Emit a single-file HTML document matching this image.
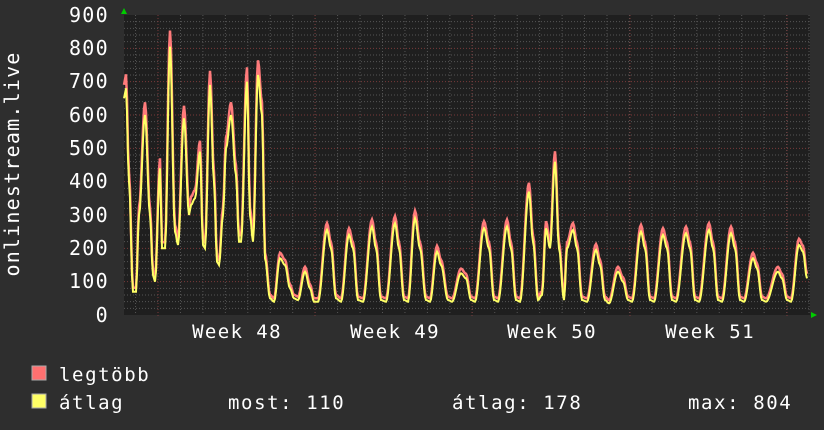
<!DOCTYPE html>
<html><head><meta charset="utf-8"><style>
body{margin:0;background:#2e2e2e;width:824px;height:430px;overflow:hidden;font-family:"DejaVu Sans Mono","Liberation Mono",monospace;color:#fff}
svg{position:absolute;left:0;top:0}
text{font-family:"DejaVu Sans Mono","Liberation Mono",monospace;fill:#fff}
</style></head><body>
<svg id="s" width="824" height="430" xmlns="http://www.w3.org/2000/svg">
<rect x="124" y="15" width="686" height="300" fill="#1f1f1f"/>
<g id="grid"></g>
<g id="data"></g>
<g font-size="20" text-anchor="end" letter-spacing="1.3">
<text x="109" y="22">900</text><text x="109" y="55">800</text><text x="109" y="88">700</text>
<text x="109" y="122">600</text><text x="109" y="155">500</text><text x="109" y="188">400</text>
<text x="109" y="222">300</text><text x="109" y="255">200</text><text x="109" y="288">100</text>
<text x="109" y="322">0</text>
</g>
<text transform="translate(19,164) rotate(-90)" font-size="20" text-anchor="middle" letter-spacing="1.2">onlinestream.live</text>
<g font-size="19" text-anchor="middle" letter-spacing="1.4">
<text x="237" y="338">Week 48</text><text x="395" y="338">Week 49</text>
<text x="552" y="338">Week 50</text><text x="710" y="338">Week 51</text>
</g>
<polygon points="121,14 127,14 124,8" fill="#00cc00"/>
<polygon points="811,312 811,318 817,315" fill="#00cc00"/>
<rect x="32" y="366" width="14" height="14" fill="#ff7070" stroke="#aaa" stroke-width="1"/>
<rect x="32" y="394" width="14" height="14" fill="#ffff66" stroke="#aaa" stroke-width="1"/>
<g font-size="19" letter-spacing="1.6">
<text x="59" y="381">legtöbb</text>
<text x="59" y="409">átlag</text>
<text x="228" y="409">most: 110</text>
<text x="452" y="409">átlag: 178</text>
<text x="688" y="409">max: 804</text>
</g>
</svg>
<script>
var ns="http://www.w3.org/2000/svg",g=document.getElementById('grid'),d=document.getElementById('data');
function ln(x1,y1,x2,y2,c){var l=document.createElementNS(ns,'line');l.setAttribute('x1',x1);l.setAttribute('y1',y1);l.setAttribute('x2',x2);l.setAttribute('y2',y2);l.setAttribute('stroke',c);l.setAttribute('stroke-width',1);l.setAttribute('stroke-dasharray','1,2');g.appendChild(l);}
for(var v=20;v<900;v+=20){var y=315-v/3;ln(124,y,810,y,v%100==0?'#7a3a3a':'#555');}
for(var x=158-22.45*1;x<810;x+=22.45){if(x>124)ln(x,15,x,315,'#555');}
[158,315,472,630,787].forEach(function(x){ln(x,15,x,318,'#7a3a3a');});
var P=[[124,650],[126,680],[129,400],[133,70],[136,70],[139,300],[145,600],[150,300],[153,120],[155,100],[160,440],[162,200],[165,200],[170,805],[175,250],[178,210],[184,590],[189,300],[191,330],[195,350],[200,490],[203,210],[205,200],[210,690],[214,400],[217,160],[219,150],[223,300],[226,500],[231,600],[236,420],[239,220],[241,220],[247,700],[250,300],[253,220],[258,720],[262,600],[265,170],[270,50],[274,40],[280,170],[285,150],[290,80],[294,50],[298,45],[305,130],[310,80],[314,40],[318,40],[327,255],[331,200],[336,50],[341,40],[349,240],[353,200],[358,45],[363,40],[372,265],[376,200],[381,45],[386,40],[395,275],[399,200],[404,45],[408,40],[415,290],[420,200],[426,45],[430,40],[437,190],[441,150],[448,45],[452,40],[461,125],[466,110],[471,45],[475,40],[484,260],[489,200],[494,45],[498,40],[507,265],[511,200],[516,45],[520,40],[529,370],[533,220],[538,45],[542,60],[546,260],[550,200],[555,460],[559,200],[564,45],[567,200],[573,255],[577,200],[582,45],[587,40],[596,195],[600,150],[605,45],[609,35],[618,130],[623,100],[628,45],[632,40],[641,250],[645,200],[650,45],[654,40],[663,240],[667,200],[672,45],[676,40],[686,245],[690,200],[695,45],[699,40],[709,255],[713,200],[718,45],[722,40],[731,245],[735,200],[740,45],[744,40],[753,170],[757,140],[762,45],[766,40],[778,130],[782,110],[787,45],[791,40],[799,210],[803,190],[807,110]];
function path(dy,sc){var s='';for(var i=0;i<P.length-1;i++){var a=P[i],b=P[i+1];for(var x=a[0];x<b[0];x+=1){var t=(x-a[0])/(b[0]-a[0]),f=(1-Math.cos(t*Math.PI))/2,v=a[1]+(b[1]-a[1])*f;v=v*sc+dy;s+=(s?'L':'M')+x+','+(315-v/3).toFixed(1);}}var l=P[P.length-1];s+='L'+l[0]+','+(315-(l[1]*sc+dy)/3);return s;}
function pl(p,c,w){var e=document.createElementNS(ns,'path');e.setAttribute('d',p);e.setAttribute('fill','none');e.setAttribute('stroke',c);e.setAttribute('stroke-width',w);d.appendChild(e);}
pl(path(8,1.05),'#ff7b7b',2.5);pl(path(0,1),'#ffff66',2);
</script>
</body></html>
